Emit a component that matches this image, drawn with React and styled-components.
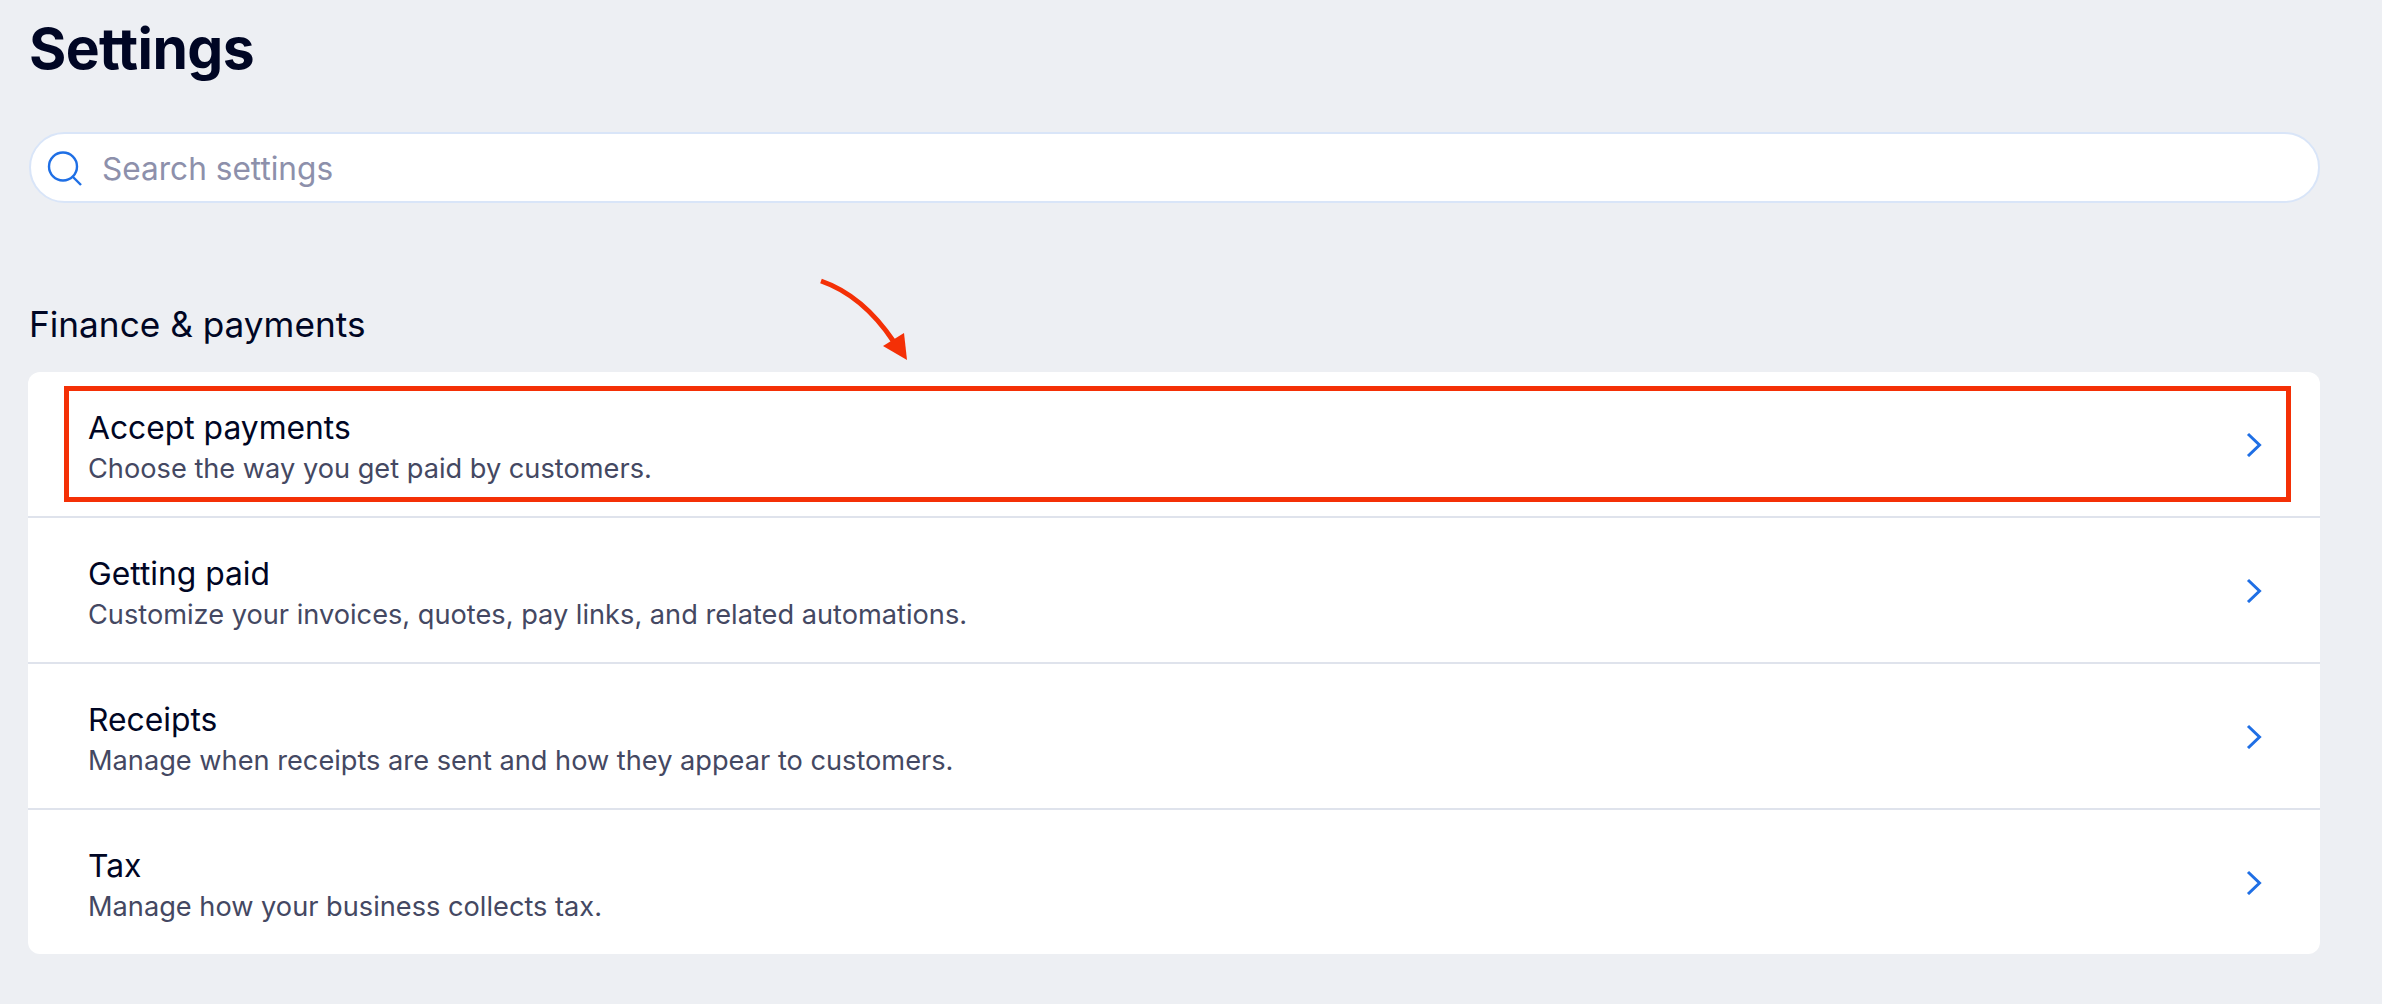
import React from 'react';
import styled, { createGlobalStyle } from 'styled-components';

const GlobalStyle = createGlobalStyle`
    html, body {
        margin: 0;
        padding: 0;
        background-color: #edeff3;
        font-family: "Inter", "Liberation Sans", sans-serif;
    }
`;

const Page = styled.div`
    position: relative;
    box-sizing: border-box;
    width: 2382px;
    height: 1004px;
    padding: 17px 62px 0 28px;
    overflow: hidden;
`;

const Title = styled.h1`
    margin: 0 0 0 1px;
    font-size: 57px;
    line-height: 64px;
    font-weight: 700;
    letter-spacing: -0.6px;
    color: #000624;
`;

const SearchBar = styled.div`
    display: flex;
    align-items: center;
    gap: 17px;
    box-sizing: border-box;
    height: 71px;
    margin: 51px 0 0 1px;
    padding: 2px 18px 0 14px;
    background-color: white;
    border: 2px solid #d9e5f8;
    border-radius: 36px;
`;

const Placeholder = styled.span`
    font-size: 31.6px;
    color: #8d90ab;
`;

const SectionTitle = styled.h2`
    margin: 100px 0 27px 1px;
    font-size: 35.2px;
    line-height: 42px;
    font-weight: 400;
    color: #000624;
`;

const Card = styled.div`
    background-color: white;
    border-radius: 12px;
`;

const Row = styled.div`
    position: relative;
    display: flex;
    align-items: center;
    justify-content: space-between;
    box-sizing: border-box;
    height: ${(props) => (props.last ? '144px' : '146px')};
    padding: 0 58px 0 60px;
    border-bottom: ${(props) => (props.last ? 'none' : '2px solid #dfe3ec')};
`;

const RowInfo = styled.div`
    padding-top: 8px;
`;

const RowTitle = styled.div`
    font-size: 31.8px;
    line-height: 41px;
    color: #000624;
`;

const RowText = styled.div`
    font-size: 27.2px;
    line-height: 41px;
    color: #444862;
`;

const Highlight = styled.div`
    position: absolute;
    top: 14px;
    left: 36px;
    width: 2227px;
    height: 116px;
    box-sizing: border-box;
    border: 5px solid #f43006;
`;

const ArrowMark = styled.svg`
    position: absolute;
    top: 270px;
    left: 810px;
`;

const SearchIcon = () => (
    <svg width="40" height="40" viewBox="0 0 40 40" fill="none" stroke="#1f6fe5" strokeWidth="2.4">
        <circle cx="18" cy="17.5" r="14" />
        <path d="M28 28 L36 36" />
    </svg>
);

const Chevron = () => (
    <svg width="16" height="26" viewBox="0 0 16 26" fill="none" stroke="#1f6fe5" strokeWidth="3">
        <path d="M2 3 L13.5 14 L2 25" />
    </svg>
);

const rows = [
    { name: 'Accept payments', text: 'Choose the way you get paid by customers.' },
    { name: 'Getting paid', text: 'Customize your invoices, quotes, pay links, and related automations.' },
    { name: 'Receipts', text: 'Manage when receipts are sent and how they appear to customers.' },
    { name: 'Tax', text: 'Manage how your business collects tax.' },
];

const App = () => {
    return (
        <Page>
            <GlobalStyle />
            <Title>Settings</Title>
            <SearchBar>
                <SearchIcon />
                <Placeholder>Search settings</Placeholder>
            </SearchBar>
            <SectionTitle>Finance &amp; payments</SectionTitle>
            <Card>
                {rows.map((row, i) => (
                    <Row key={row.name} last={i === rows.length - 1}>
                        <RowInfo>
                            <RowTitle>{row.name}</RowTitle>
                            <RowText>{row.text}</RowText>
                        </RowInfo>
                        <Chevron />
                        {i === 0 && <Highlight />}
                    </Row>
                ))}
            </Card>
            <ArrowMark width="110" height="100" viewBox="0 0 110 100">
                <path d="M11 11 C40 21 64 42 84 72" fill="none" stroke="#f43006" strokeWidth="5" />
                <path d="M97 90 L94 63 L73 76 Z" fill="#f43006" />
            </ArrowMark>
        </Page>
    );
};

export default App;
